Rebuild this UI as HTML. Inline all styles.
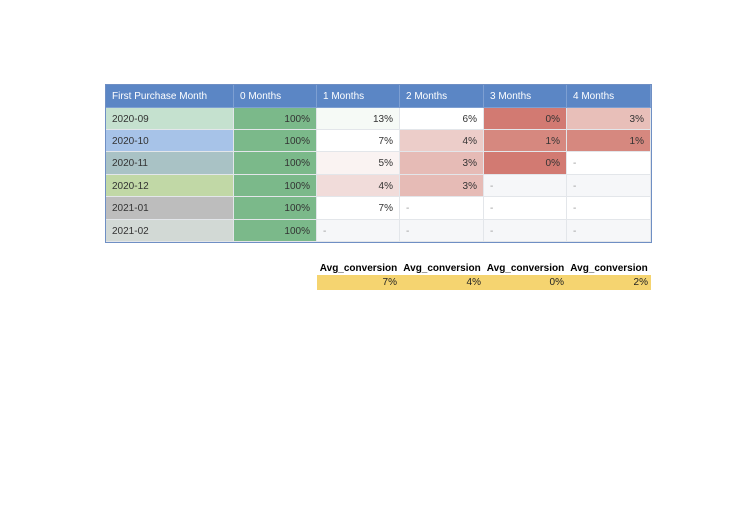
<!DOCTYPE html>
<html><head><style>
body{margin:0;width:756px;height:522px;background:#fff;font-family:"Liberation Sans",Arial,sans-serif;position:relative;overflow:hidden}
.c{position:absolute;box-sizing:border-box;font-size:10px;color:#333;line-height:23px;padding:0 6px;border-right:1px solid #e3e6ea;border-bottom:1px solid #e3e6ea;white-space:nowrap}
.h{background:#5b86c5;color:#fff;border-color:#7d9fd2;line-height:24px}
.r{text-align:right}
</style></head><body>
<div style="position:absolute;left:105px;top:84px;width:547px;height:159px;border:1px solid #6f8fc4;box-sizing:border-box"></div>
<div id="t"></div>
<div style="position:absolute;left:317px;top:263px;width:334px;height:12px;font-size:10px;font-weight:bold;color:#000;display:flex">
<div style="width:83px;text-align:center">Avg_conversion</div><div style="width:84px;text-align:center">Avg_conversion</div><div style="width:83px;text-align:center">Avg_conversion</div><div style="width:84px;text-align:center">Avg_conversion</div></div>
<div style="position:absolute;left:317px;top:275px;width:334px;height:15px;background:#f5d470;font-size:10px;color:#222;display:flex;line-height:15px">
<div style="width:83px;text-align:right;padding-right:3px;box-sizing:border-box">7%</div><div style="width:84px;text-align:right;padding-right:3px;box-sizing:border-box">4%</div><div style="width:83px;text-align:right;padding-right:3px;box-sizing:border-box">0%</div><div style="width:84px;text-align:right;padding-right:3px;box-sizing:border-box">2%</div></div>
<script>
var xs=[106,234,317,400,484,567,651],ys=[85,108,130,152,175,197,220,242];
var hdr=["First Purchase Month","0 Months","1 Months","2 Months","3 Months","4 Months"];
var rows=[
[["2020-09","#c5e1cf"],["100%","#7bb98a"],["13%","#f6faf6"],["6%","#fff"],["0%","#d27a72"],["3%","#e8bfb9"]],
[["2020-10","#a7c3e8"],["100%","#7bb98a"],["7%","#fff"],["4%","#eccdc9"],["1%","#d6887f"],["1%","#d6887f"]],
[["2020-11","#a9c2c5"],["100%","#7bb98a"],["5%","#faf3f2"],["3%","#e6bbb6"],["0%","#d27a72"],["-","#fff"]],
[["2020-12","#c1d8a6"],["100%","#7bb98a"],["4%","#f1dcda"],["3%","#e6bbb6"],["-","#f6f7f9"],["-","#f6f7f9"]],
[["2021-01","#bdbdbd"],["100%","#7bb98a"],["7%","#fff"],["-","#fff"],["-","#fff"],["-","#fff"]],
[["2021-02","#d2d9d5"],["100%","#7bb98a"],["-","#f6f7f9"],["-","#f6f7f9"],["-","#f6f7f9"],["-","#f6f7f9"]]];
var h="";
for(var j=0;j<6;j++)h+='<div class="c h" style="left:'+xs[j]+'px;top:85px;width:'+(xs[j+1]-xs[j])+'px;height:23px">'+hdr[j]+'</div>';
for(var i=0;i<6;i++)for(var j=0;j<6;j++){var v=rows[i][j];var r=(j>0&&v[0]!="-")?" r":"";var col=v[0]=="-"?"color:#999;":"";
h+='<div class="c'+r+'" style="'+col+'background:'+v[1]+';left:'+xs[j]+'px;top:'+ys[i+1]+'px;width:'+(xs[j+1]-xs[j])+'px;height:'+(ys[i+2]-ys[i+1])+'px">'+v[0]+'</div>';}
document.getElementById("t").innerHTML=h;
</script>
</body></html>
